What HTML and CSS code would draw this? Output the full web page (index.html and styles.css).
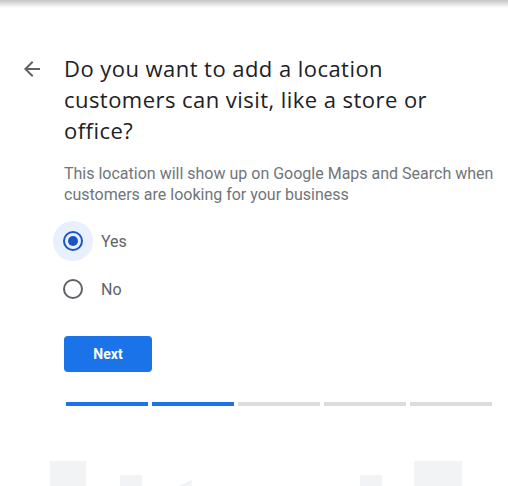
FILE: index.html
```html
<!DOCTYPE html>
<html lang="en">
<head>
  <meta charset="UTF-8">
  <meta name="viewport" content="width=device-width, initial-scale=1.0">
  <title>Add a location</title>
  <link rel="stylesheet" href="styles.css">
</head>
<body>
  <div class="top-shadow"></div>
  <div class="page">
    <div class="back">
      <svg width="24" height="24" viewBox="0 0 24 24"><path d="M20 11H7.83l5.59-5.59L12 4l-8 8 8 8 1.41-1.41L7.83 13H20v-2z" fill="#5f6368"/></svg>
    </div>
    <div class="content">
      <h1>Do you want to add a location customers can visit, like a store or office?</h1>
      <p class="desc">This location will show up on Google Maps and Search when customers are looking for your business</p>

      <div class="radios">
        <label class="radio checked">
          <span class="halo"><span class="circle"><span class="dot"></span></span></span>
          <span class="radio-label">Yes</span>
        </label>
        <label class="radio">
          <span class="halo"><span class="circle"></span></span>
          <span class="radio-label">No</span>
        </label>
      </div>

      <button class="next">Next</button>

      <div class="progress">
        <span class="step done"></span>
        <span class="step done"></span>
        <span class="step"></span>
        <span class="step"></span>
        <span class="step"></span>
      </div>
    </div>
  </div>

  <svg class="illustration" width="508" height="25" viewBox="0 0 508 25">
    <rect x="50" y="0" width="36" height="25" fill="#f1f3f4"/>
    <rect x="120" y="14" width="22" height="11" fill="#f1f3f4"/>
    <polygon points="178,25 192,19 192,25" fill="#f1f3f4"/>
    <rect x="360" y="14" width="22" height="11" fill="#f1f3f4"/>
    <rect x="414" y="0" width="48" height="25" fill="#f1f3f4"/>
  </svg>
</body>
</html>
```

FILE: styles.css
```css
body {
  margin: 0;
  background: #fff;
  font-family: Roboto, Arial, sans-serif;
  color: #202124;
  height: 486px;
  overflow: hidden;
  position: relative;
}
.top-shadow {
  height: 8px;
  background: linear-gradient(to bottom, #c4c4c4, rgba(255,255,255,0));
}
.page {
  display: flex;
  padding: 45px 0 0 20px;
}
.back {
  width: 24px;
  height: 24px;
  margin-top: 4px;
  margin-right: 20px;
}
.content {
  width: 432px;
}
h1 {
  font-family: "Open Sans", Roboto, sans-serif;
  font-weight: 400;
  font-size: 22px;
  line-height: 31px;
  letter-spacing: 0.45px;
  max-width: 365px;
  margin: 0 0 17px 0;
  color: #202124;
}
.desc {
  font-size: 16px;
  line-height: 21px;
  color: #70757a;
  margin: 0 0 16px 0;
}
.radios {
  display: flex;
  flex-direction: column;
  gap: 8px;
  margin-left: -11px;
}
.radio {
  display: flex;
  align-items: center;
  cursor: pointer;
}
.halo {
  width: 40px;
  height: 40px;
  border-radius: 50%;
  display: flex;
  align-items: center;
  justify-content: center;
}
.radio.checked .halo {
  background: #e8f0fe;
}
.circle {
  width: 16px;
  height: 16px;
  border: 2px solid #5f6368;
  border-radius: 50%;
  display: flex;
  align-items: center;
  justify-content: center;
}
.radio.checked .circle {
  border-color: #1a55c2;
}
.dot {
  width: 10px;
  height: 10px;
  border-radius: 50%;
  background: #1a55c2;
}
.radio-label {
  font-size: 16px;
  color: #5f6368;
  margin-left: 8px;
}
.next {
  margin-top: 27px;
  width: 88px;
  height: 36px;
  background: #1a73e8;
  color: #fff;
  border: none;
  border-radius: 4px;
  font-family: Roboto, Arial, sans-serif;
  font-weight: 700;
  font-size: 14px;
  cursor: pointer;
}
.progress {
  display: flex;
  gap: 4px;
  margin-top: 30px;
  margin-left: 2px;
}
.step {
  width: 82px;
  height: 4px;
  background: #dadce0;
}
.step.done {
  background: #1a73e8;
}
.illustration {
  position: absolute;
  left: 0;
  bottom: 0;
}
```
